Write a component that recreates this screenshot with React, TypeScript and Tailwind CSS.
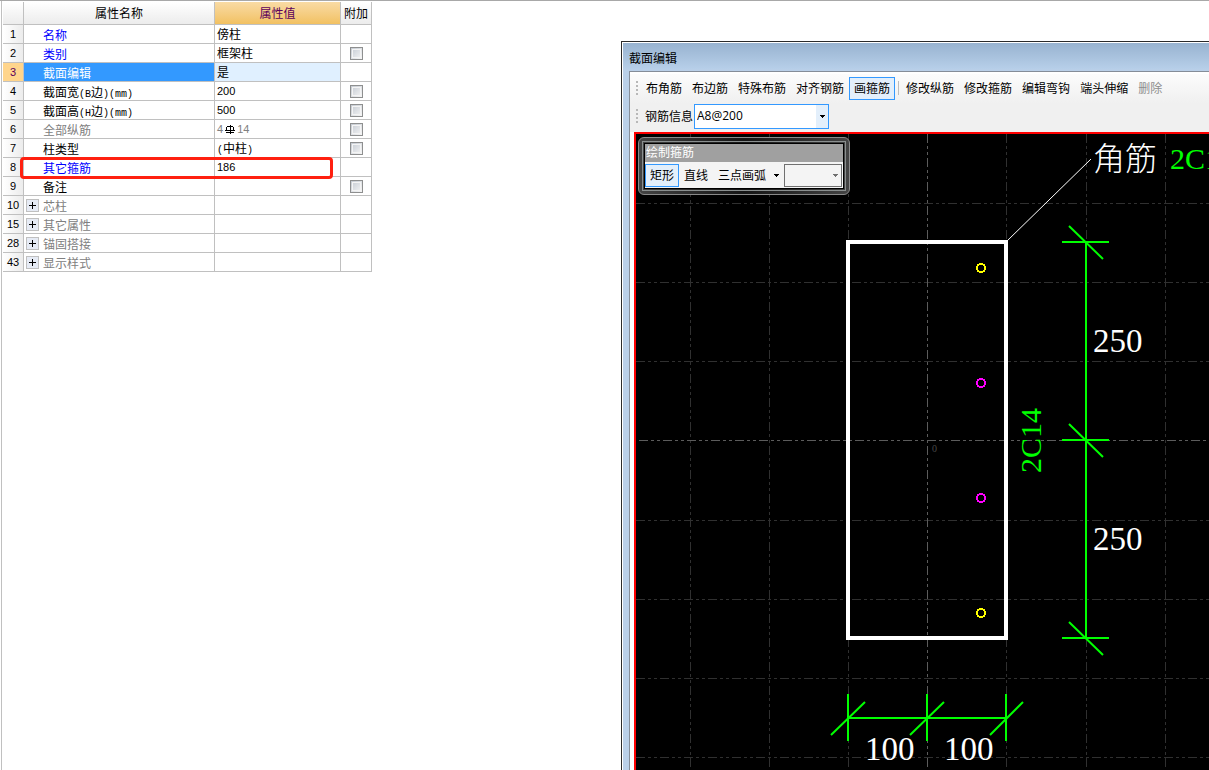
import React from "react"

type Row = {
  id: number
  name: string
  value?: React.ReactNode
  tone?: "blue" | "gray" | "selected"
  check?: boolean
  group?: boolean
}

function RebarSign() {
  return (
    <svg
      className="inline-block mx-0.5 align-[-1px]"
      width="10"
      height="9"
      viewBox="0 0 10 9"
      fill="none"
      stroke="#000"
      shapeRendering="crispEdges"
      aria-hidden="true"
    >
      <path d="M2 1.5H8M1.5 2V5M8.5 2V5M0 5.5H10M5 0V9M1 7.5H9" />
    </svg>
  )
}

const rows: Row[] = [
  { id: 1, name: "名称", value: "傍柱", tone: "blue" },
  { id: 2, name: "类别", value: "框架柱", tone: "blue", check: true },
  { id: 3, name: "截面编辑", value: "是", tone: "selected" },
  { id: 4, name: "截面宽(B边)(mm)", value: "200", check: true },
  { id: 5, name: "截面高(H边)(mm)", value: "500", check: true },
  {
    id: 6,
    name: "全部纵筋",
    value: (
      <>
        4<RebarSign />14
      </>
    ),
    tone: "gray",
    check: true,
  },
  { id: 7, name: "柱类型", value: "(中柱)", check: true },
  { id: 8, name: "其它箍筋", value: "186", tone: "blue" },
  { id: 9, name: "备注", check: true },
  { id: 10, name: "芯柱", tone: "gray", group: true },
  { id: 15, name: "其它属性", tone: "gray", group: true },
  { id: 28, name: "锚固搭接", tone: "gray", group: true },
  { id: 43, name: "显示样式", tone: "gray", group: true },
]

// latin letters are half as wide as the Chinese ones
function Mixed({ text }: { text: string }) {
  return (
    <>
      {text.split(/([\x20-\x7e]+)/).map((part, i) =>
        i % 2 ? (
          <span key={i} className="font-['Liberation_Mono',monospace] text-[10px] leading-none">
            {part}
          </span>
        ) : (
          part
        )
      )}
    </>
  )
}

function PropertyRow({ row }: { row: Row }) {
  const selected = row.tone === "selected"
  const nameTone = selected
    ? "bg-[#3399ff] text-white"
    : row.tone === "blue"
      ? "text-[#0000ff]"
      : row.tone === "gray"
        ? "text-[#808080]"
        : "text-black"
  const chinese = typeof row.value === "string" && !/^\d+$/.test(row.value)
  return (
    <tr className="h-[19px]">
      <th
        scope="row"
        className={`border-r border-b border-[#c0c0c0] text-center text-[11px] font-normal ${
          selected
            ? "bg-[#ffd58c] text-[#5c005c]"
            : "bg-linear-to-r from-white to-[#ececec]"
        }`}
      >
        {row.id}
      </th>
      <td className={`relative border-r border-b border-[#c0c0c0] pl-[19px] pt-[3px] ${nameTone}`}>
        {row.group && (
          <button
            aria-label={`展开${row.name}`}
            className="absolute left-0.5 top-[3px] flex size-[13px] items-center justify-center border border-[#c0c0c0] bg-[#e6ebf5]"
          >
            <svg width="7" height="7" stroke="#000" shapeRendering="crispEdges">
              <path d="M0 3.5H7M3.5 0V7" />
            </svg>
          </button>
        )}
        <Mixed text={row.name} />
        {row.id === 8 && (
          <span className="pointer-events-none absolute -left-1 -top-px z-10 h-[22px] w-[313px] rounded-[4px] border-3 border-[#ff2010]" />
        )}
      </td>
      <td
        className={`border-r border-b border-[#c0c0c0] pl-0.5 ${chinese ? "pt-0.5" : "text-[11px]"} ${
          selected ? "bg-[#e0f0ff]" : ""
        } ${row.tone === "gray" ? "text-[#808080]" : "text-black"}`}
      >
        {chinese ? <Mixed text={row.value as string} /> : row.value}
      </td>
      <td className="border-r border-b border-[#c0c0c0]">
        {row.check && (
          <input
            type="checkbox"
            aria-label={`附加 ${row.name}`}
            className="mx-auto block size-[13px] appearance-none border border-[#8e8f8f] bg-linear-to-br from-[#c4cad2] to-[#f6f6f6] outline outline-[#f4f4f4] -outline-offset-3"
          />
        )}
      </td>
    </tr>
  )
}

function PropertyTable() {
  return (
    <div className="shrink-0 border-l border-[#c0c0c0] pl-px pt-px">
      <table className="w-[369px] table-fixed border-separate border-spacing-0 text-left leading-[14px]">
        <colgroup>
          <col className="w-[21px]" />
          <col className="w-[191px]" />
          <col className="w-[126px]" />
          <col className="w-[31px]" />
        </colgroup>
        <thead>
          <tr className="h-[23px] text-center [&>*]:border-r [&>*]:border-b [&>*]:border-[#c0c0c0] [&>*]:pt-px [&>*]:font-normal">
            <td className="bg-linear-to-b from-white to-[#ececec]" />
            <th scope="col" className="bg-linear-to-b from-white to-[#ececec]">属性名称</th>
            <th scope="col" className="bg-linear-to-b from-[#f9dba4] to-[#f2c161] text-[#5c005c]">属性值</th>
            <th scope="col" className="bg-linear-to-b from-white to-[#ececec]">附加</th>
          </tr>
        </thead>
        <tbody>
          {rows.map((row) => (
            <PropertyRow key={row.id} row={row} />
          ))}
        </tbody>
      </table>
    </div>
  )
}

function Grip() {
  return (
    <svg width="2" height="16" stroke="#b8b8b8" strokeWidth="2" strokeDasharray="2 2" aria-hidden="true">
      <path d="M1 1V15" />
    </svg>
  )
}

const toolButton = "h-[23px] shrink-0 border px-1 pt-px whitespace-nowrap"

function Toolbars() {
  return (
    <div className="flex h-[58px] flex-col bg-linear-to-b from-[#fcfcfc] to-[#f0f0f0] to-50% pl-1.5">
      <div className="flex h-7 items-center">
        <Grip />
        <div className="ml-[3px] flex items-center">
          {["布角筋", "布边筋", "特殊布筋", "对齐钢筋"].map((label) => (
            <button key={label} className={`${toolButton} border-transparent`}>
              {label}
            </button>
          ))}
          <button className={`${toolButton} border-[#3399ff] bg-[#e3effb]`}>画箍筋</button>
          <span className="ml-[3px] mr-0.5 h-3.5 w-px bg-[#bdbdbd]" />
          {["修改纵筋", "修改箍筋", "编辑弯钩", "端头伸缩"].map((label) => (
            <button key={label} className={`${toolButton} border-transparent`}>
              {label}
            </button>
          ))}
          <button disabled className={`${toolButton} border-transparent text-[#8d8d8d]`}>
            删除
          </button>
        </div>
      </div>
      <div className="flex h-7 items-center">
        <Grip />
        <label htmlFor="rebar" className="ml-[7px] mr-px pt-px">
          钢筋信息
        </label>
        <div className="relative">
          <select
            id="rebar"
            className="block h-[25px] w-[135px] appearance-none border border-[#3399ff] bg-white pl-0.5 font-['Open_Sans',sans-serif] text-xs"
          >
            <option>A8@200</option>
          </select>
          <span className="pointer-events-none absolute right-px top-px flex h-[23px] w-3 items-center justify-center bg-[#e3effb]">
            <Caret color="#000" />
          </span>
        </div>
      </div>
    </div>
  )
}

function Caret({ color }: { color: string }) {
  return (
    <svg width="5" height="3" fill={color} shapeRendering="crispEdges" aria-hidden="true">
      <path d="M0 0H5V1H4V2H3V3H2V2H1V1H0Z" />
    </svg>
  )
}

function DrawPalette() {
  return (
    <div className="absolute left-0.5 top-[3px] rounded-[6px] border border-[#8a8a8a] bg-linear-to-r from-[#444] via-[#151515] to-[#444] p-[3px]">
      <div className="border border-[#8a8f8f] p-px">
        <div className="border border-black bg-[#f4f4f4]">
          <div className="h-[18px] bg-[#a0a0a0] pl-px leading-[18px] text-white">绘制箍筋</div>
          <div className="flex h-[26px] items-center">
            <button className="h-[23px] border border-[#3399ff] bg-[#e3effb] px-1 pt-px">矩形</button>
            <button className="h-[23px] px-[5px] pt-px">直线</button>
            <button className="flex h-[23px] items-center gap-2 pl-[5px] pt-px">
              三点画弧
              <Caret color="#000" />
            </button>
            <div className="relative ml-[5px] mr-px">
              <select
                aria-label="画弧方式"
                disabled
                className="block h-[23px] w-[58px] appearance-none border border-[#707070] bg-[#f4f4f4]"
              />
              <span className="pointer-events-none absolute right-1 top-2.5">
                <Caret color="#707070" />
              </span>
            </div>
          </div>
        </div>
      </div>
    </div>
  )
}

const gridX = [54, 133, 212, 370, 450, 529]
const gridY = [69, 148, 227, 386, 465, 544, 623]

function SectionDrawing() {
  return (
    <svg
      className="block h-full w-full"
      fill="none"
      fontFamily="'Liberation Serif','Noto Sans CJK SC',serif"
      role="img"
      aria-label="截面图"
    >
      <g stroke="#303030" strokeDasharray="9 3 3 3 3 3" shapeRendering="crispEdges">
        {gridX.map((x) => (
          <path key={x} d={`M${x}.5 0V2000`} />
        ))}
        {gridY.map((y) => (
          <path key={y} d={`M0 ${y}.5H3000`} />
        ))}
        <path stroke="#5c5c5c" d="M291.5 0V2000M3 306.5H3000" />
      </g>
      <rect x="212" y="108" width="158" height="396" stroke="#fff" strokeWidth="4" />
      <path d="M371 107L455 25" stroke="#fff" />
      <g stroke="#00ff00" strokeWidth="2">
        <path d="M450 108V504M426 108H473M426 306H473M426 504H473" />
        <path d="M433 92L467 125M433 290L467 323M433 488L467 521" />
        <path d="M212 584H370M212 560V607M291 560V607M370 560V607" />
        <path d="M195 601L229 568M274 601L308 568M354 601L387 568" />
      </g>
      <g strokeWidth="2" shapeRendering="crispEdges">
        <circle cx="345" cy="134" r="4" stroke="#ffff00" />
        <circle cx="345" cy="249" r="4" stroke="#ff00ff" />
        <circle cx="345" cy="364" r="4" stroke="#ff00ff" />
        <circle cx="345" cy="479" r="4" stroke="#ffff00" />
      </g>
      <g fill="#fff" fontSize="33">
        <text x="457" y="36" fontSize="32" fontWeight="300">角筋</text>
        <text x="457" y="218">250</text>
        <text x="457" y="416">250</text>
        <text x="229" y="626">100</text>
        <text x="308" y="626">100</text>
      </g>
      <g fill="#00ff00" fontSize="30">
        <text x="534" y="35">2C14</text>
        <text transform="translate(405 339) rotate(-90)">2C14</text>
      </g>
      <text x="296" y="318" fill="#484848" fontSize="10">0</text>
    </svg>
  )
}

function SectionEditor() {
  return (
    <section className="ml-[249px] mt-10 flex min-w-0 flex-1 flex-col overflow-hidden border-l border-t border-[#2b2b2b]">
      <div className="flex flex-1 flex-col border-l border-t border-white bg-[#b9cfe8]">
        <h1 className="h-[26px] bg-linear-to-b from-[#98b3d0] to-[#b7cfe9] pl-1.5 leading-[33px]">截面编辑</h1>
        <div className="ml-1.5 mt-0.5 flex flex-1 flex-col border-l border-t border-[#858d98] bg-white pt-0.5">
          <Toolbars />
          <div className="relative ml-1 flex-1 border-l-2 border-t-2 border-[#ff0000] bg-black">
            <SectionDrawing />
            <DrawPalette />
          </div>
        </div>
      </div>
    </section>
  )
}

export default function App() {
  return (
    <main className="flex h-screen items-stretch overflow-hidden border-t border-[#a8a8a8] bg-white pl-px font-['Liberation_Sans','Noto_Sans_CJK_SC',sans-serif] text-[12px] text-black">
      <PropertyTable />
      <SectionEditor />
    </main>
  )
}
